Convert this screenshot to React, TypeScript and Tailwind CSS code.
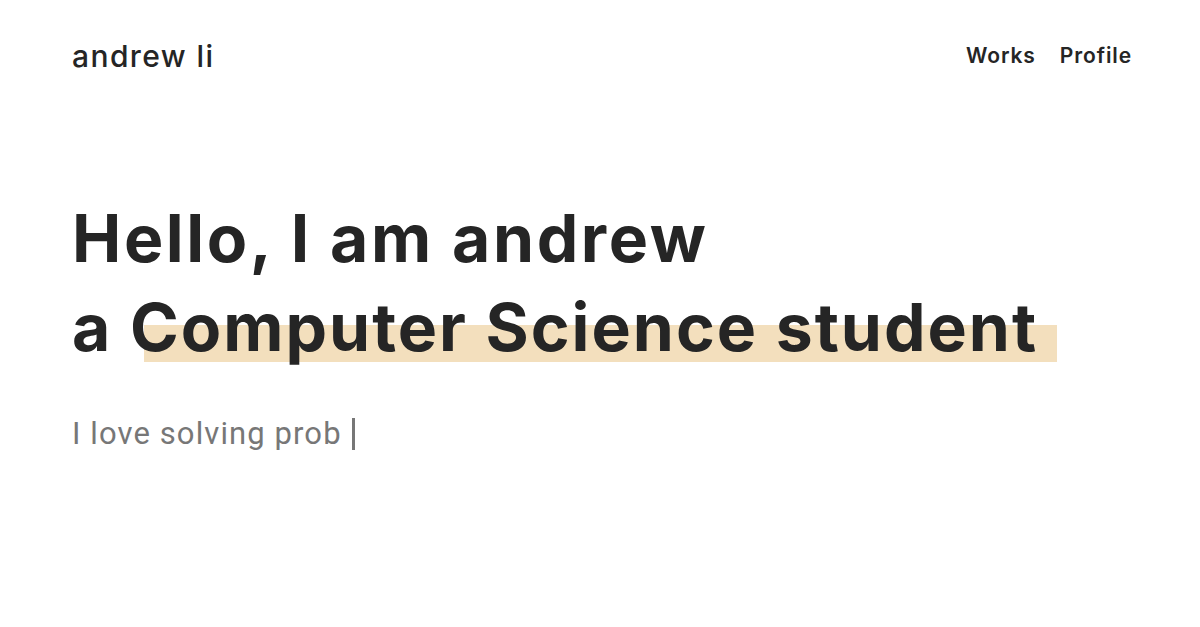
const display = "font-['Inter','Open_Sans',sans-serif]"

export default function App() {
  return (
    <div className="min-h-[627px] w-full bg-white text-[#252525]">
      <header className={`flex items-center justify-between pl-[72px] pr-[68px] pt-[36px] ${display}`}>
        <a className="text-[30px] font-medium leading-[40px] tracking-[1.4px]">andrew li</a>
        <nav className="flex gap-[24px] text-[21px] font-semibold leading-[40px] tracking-[0.9px]">
          <a>Works</a>
          <a>Profile</a>
        </nav>
      </header>

      <main className="pl-[72px] pt-[118px]">
        <h1 className={`text-[66px] font-bold leading-[89px] tracking-[2px] ${display}`}>
          <span className="tracking-[2.6px]">Hello, I am andrew</span>
          <br />
          a{' '}
          <span className="relative inline-block">
            <span className="absolute left-[14px] right-[-19px] top-[42px] h-[37px] bg-[#f3dfbd]" />
            <span className="relative">Computer Science student</span>
          </span>
        </h1>

        <p className="mt-[42px] flex items-center text-[31px] leading-[40px] tracking-[1.1px] text-[#777] font-['Roboto',sans-serif]">
          I love solving prob
          <span className="ml-[10px] inline-block h-[32px] w-[3px] bg-[#777]" />
        </p>
      </main>
    </div>
  )
}
